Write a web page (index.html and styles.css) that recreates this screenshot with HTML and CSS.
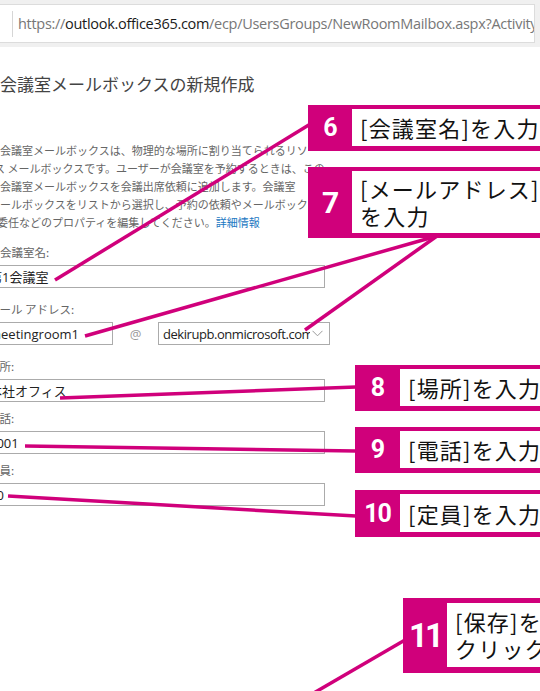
FILE: index.html
```html
<!DOCTYPE html>
<html lang="ja">
<head>
    <meta charset="UTF-8">
    <meta name="viewport" content="width=device-width, initial-scale=1.0">
    <title>新しい会議室メールボックス</title>
    <link rel="stylesheet" href="styles.css">
</head>
<body>
    <!-- アドレスバー -->
    <div class="browser-bar">
        <div class="address">
            <span class="address-text">https://<b>outlook.office365.com</b>/ecp/UsersGroups/NewRoomMailbox.aspx?ActivityCorrelationID=</span>
        </div>
    </div>

    <!-- ダイアログ本体 -->
    <main class="dialog">
        <h1 class="dialog-title">会議室メールボックスの新規作成</h1>
        <p class="dialog-desc">
            <span class="ln">会議室メールボックスは、物理的な場所に割り当てられるリソー</span>
            <span class="ln shift-s">ス メールボックスです。ユーザーが会議室を予約するときは、この</span>
            <span class="ln">会議室メールボックスを会議出席依頼に追加します。会議室</span>
            <span class="ln shift-l">メールボックスをリストから選択し、予約の依頼やメールボックスの</span>
            <span class="ln shift-xs">委任などのプロパティを編集してください。<a href="#" class="more">詳細情報</a></span>
        </p>

        <form class="form">
            <div class="field">
                <label class="field-label"><span class="req">*</span>会議室名:</label>
                <input class="input" type="text" value="第1会議室">
            </div>
            <div class="field">
                <label class="field-label">メール アドレス:</label>
                <div class="addr-row">
                    <input class="input input-alias" type="text" value="meetingroom1">
                    <span class="at">@</span>
                    <div class="select">
                        <span class="select-value">dekirupb.onmicrosoft.com</span>
                        <svg class="chevron" width="11" height="7" viewBox="0 0 11 7"><path d="M0.5 0.8 L5.5 5.8 L10.5 0.8" fill="none" stroke="#9a9a9a" stroke-width="1"/></svg>
                    </div>
                </div>
            </div>
            <div class="field compact">
                <label class="field-label">場所:</label>
                <input class="input" type="text" value="本社オフィス">
            </div>
            <div class="field compact">
                <label class="field-label">電話:</label>
                <input class="input" type="text" value="0001">
            </div>
            <div class="field">
                <label class="field-label">定員:</label>
                <input class="input" type="text" value="10">
            </div>
        </form>
    </main>

    <!-- 手順の注釈 -->
    <div class="notes">
        <svg class="leaders" width="540" height="691" viewBox="0 0 540 691">
            <g stroke="#d0007b" stroke-width="3.5" fill="none">
                <path d="M312 123 L55 280"/>
                <path d="M437 236 L85 336"/>
                <path d="M437 236 L305 330"/>
                <path d="M356 387 L60 398"/>
                <path d="M356 451 L25 446"/>
                <path d="M356 516 L8 496"/>
                <path d="M405 640 L300 701"/>
            </g>
        </svg>

        <div class="callout step-6"><span class="num">6</span><span class="text">[会議室名]を入力</span></div>
        <div class="callout step-7"><span class="num">7</span><span class="text">[メールアドレス]<br>を入力</span></div>
        <div class="callout step-8"><span class="num">8</span><span class="text">[場所]を入力</span></div>
        <div class="callout step-9"><span class="num">9</span><span class="text">[電話]を入力</span></div>
        <div class="callout step-10"><span class="num">10</span><span class="text">[定員]を入力</span></div>
        <div class="callout step-11"><span class="num">11</span><span class="text">[保存]を<br>クリック</span></div>
    </div>
</body>
</html>
```

FILE: styles.css
```css
/* 基本 */
* {
    margin: 0;
    padding: 0;
    box-sizing: border-box;
}

html, body {
    width: 540px;
    height: 691px;
    overflow: hidden;
}

body {
    position: relative;
    background: #fff;
    font-family: 'Open Sans', 'Noto Sans CJK JP', sans-serif;
    color: #333;
}

/* アドレスバー */
.browser-bar {
    background: #f0f0f0;
    padding: 4px 0;
}

.address {
    width: 537px;
    height: 39px;
    margin-left: -2px;
    background: #fff;
    border: 1px solid #dcdcdc;
    display: flex;
    align-items: center;
    padding-left: 13px;
}

.address-text {
    border-left: 1px solid #d6d6d6;
    padding-left: 5px;
    line-height: 26px;
    font-size: 14.5px;
    color: #777;
    white-space: nowrap;
    overflow: hidden;
    letter-spacing: -0.3px;
}

.address-text b {
    font-weight: normal;
    color: #1a1a1a;
}

/* ダイアログ */
.dialog {
    margin-left: -16px;
    padding-top: 25px;
    font-family: 'Noto Sans CJK JP', sans-serif;
}

.dialog-title {
    padding-left: 16px;
    font-size: 17px;
    font-weight: normal;
    line-height: 24px;
    color: #444;
}

.dialog-desc {
    margin-top: 45px;
    padding-left: 16px;
    font-size: 11px;
    line-height: 18px;
    color: #666;
    white-space: nowrap;
}

.dialog-desc .ln {
    display: block;
}

.shift-s { margin-left: -6px; }
.shift-xs { margin-left: -3px; }
.shift-l { margin-left: -11px; }

.more {
    color: #1a78c2;
    text-decoration: none;
}

/* フォーム */
.form {
    margin-top: 13px;
}

.field {
    margin-bottom: 13px;
}

.field.compact {
    margin-bottom: 8px;
}

.field-label {
    display: block;
    padding-left: 4px;
    margin-bottom: 5px;
    font-size: 11.5px;
    line-height: 16px;
    color: #666;
}

.req {
    display: inline-block;
    width: 12px;
}

.input {
    display: block;
    width: 341px;
    height: 23px;
    border: 1px solid #ababab;
    padding: 0 4px;
    font-family: 'Open Sans', 'Noto Sans CJK JP', sans-serif;
    font-size: 13px;
    color: #222;
    background: #fff;
    outline: none;
}

.addr-row {
    display: flex;
    align-items: center;
}

.input-alias {
    width: 129px;
}

.at {
    width: 45px;
    text-align: center;
    font-family: 'Open Sans', sans-serif;
    font-size: 13px;
    color: #999;
}

.select {
    width: 172px;
    height: 23px;
    border: 1px solid #ababab;
    display: flex;
    align-items: center;
    padding: 0 6px 0 4px;
    gap: 2px;
}

.select-value {
    flex: 1;
    overflow: hidden;
    white-space: nowrap;
    font-family: 'Open Sans', sans-serif;
    font-size: 13px;
    color: #222;
    letter-spacing: -0.45px;
}

.chevron {
    flex-shrink: 0;
}

/* 注釈 */
.notes {
    position: absolute;
    inset: 0;
    pointer-events: none;
}

.leaders {
    position: absolute;
    top: 0;
    left: 0;
}

.callout {
    position: absolute;
    right: -80px;
    display: flex;
    background: #d0007b;
    padding: 4px 0 5px;
}

.callout .num {
    width: 44px;
    display: flex;
    align-items: center;
    justify-content: center;
    color: #fff;
    font-family: Roboto, 'DejaVu Sans', sans-serif;
    font-weight: 700;
    font-size: 25px;
    letter-spacing: -1px;
}

.callout .text {
    flex: 1;
    display: flex;
    align-items: center;
    background: #fff;
    padding-left: 8px;
    font-family: 'Noto Sans CJK JP', sans-serif;
    font-size: 22px;
    line-height: 27px;
    letter-spacing: 1.2px;
    color: #111;
    white-space: nowrap;
}

.step-6  { left: 308px; top: 105px; height: 46px; }
.step-7  { left: 308px; top: 167px; height: 71px; }
.step-8  { left: 355px; top: 365px; height: 46px; }
.step-9  { left: 355px; top: 427px; height: 46px; }
.step-10 { left: 355px; top: 490px; height: 47px; }
.step-11 { left: 403px; top: 598px; height: 75px; padding: 5px 0 6px; }

.step-7 .num { font-size: 30px; }
.step-8 .num,
.step-9 .num,
.step-10 .num { width: 45px; }
.step-11 .num { font-size: 33px; letter-spacing: -3px; }
```
